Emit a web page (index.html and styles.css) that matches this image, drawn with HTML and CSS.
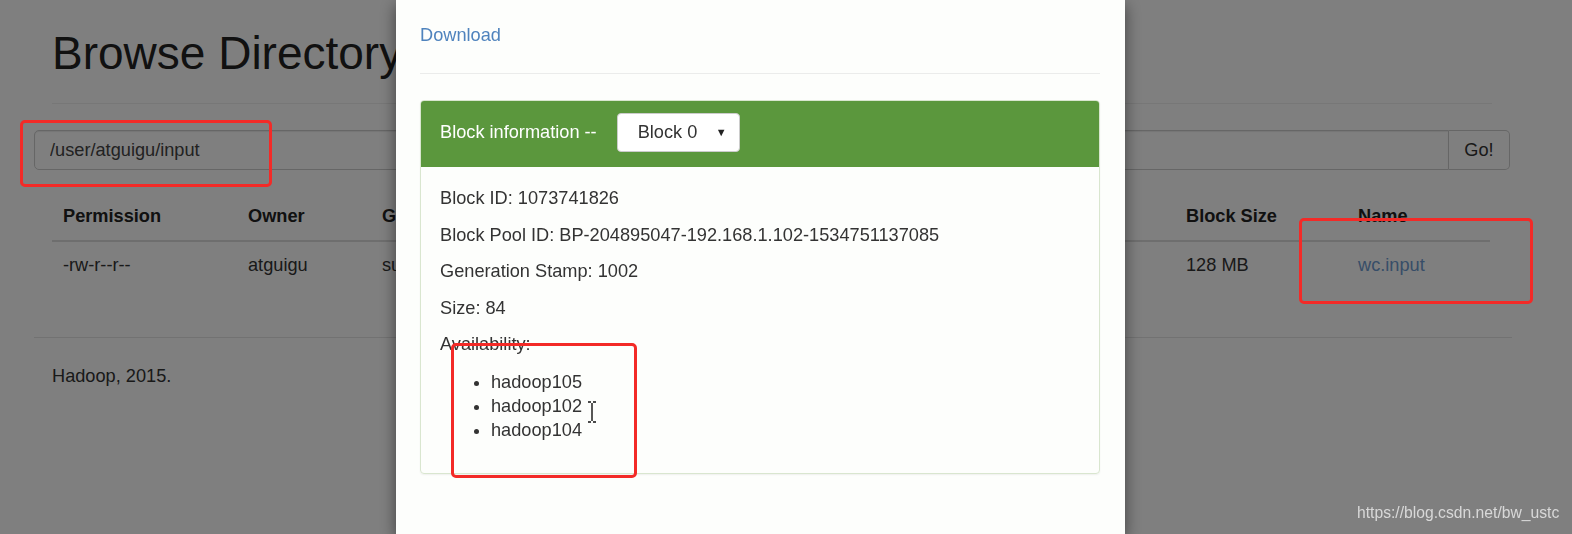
FILE: index.html
```html
<!DOCTYPE html>
<html lang="en">
<head>
    <meta charset="UTF-8">
    <title>Browsing HDFS</title>
    <link rel="stylesheet" href="styles.css">
</head>
<body>
    <div class="page">
        <h1>Browse Directory</h1>
        <hr class="rule">

        <form class="path-form">
            <input class="path-input" type="text" value="/user/atguigu/input">
            <button class="path-go" type="button">Go!</button>
        </form>

        <table class="listing">
            <colgroup>
                <col class="c-perm">
                <col class="c-owner">
                <col class="c-group">
                <col class="c-hidden">
                <col class="c-block">
                <col class="c-name">
            </colgroup>
            <thead>
                <tr>
                    <th>Permission</th>
                    <th>Owner</th>
                    <th class="clip">Group</th>
                    <th></th>
                    <th>Block Size</th>
                    <th>Name</th>
                </tr>
            </thead>
            <tbody>
                <tr>
                    <td>-rw-r--r--</td>
                    <td>atguigu</td>
                    <td class="clip">supergroup</td>
                    <td></td>
                    <td>128 MB</td>
                    <td><a href="#">wc.input</a></td>
                </tr>
            </tbody>
        </table>

        <hr class="footer-rule">
        <p class="footer">Hadoop, 2015.</p>
    </div>

    <div class="backdrop">
        <div class="modal">
            <a class="download" href="#">Download</a>
            <hr class="modal-rule">

            <div class="panel">
                <div class="panel-heading">
                    <span>Block information --</span>
                    <div class="block-select">
                        <span>Block 0</span>
                        <span class="caret">&#9660;</span>
                    </div>
                </div>
                <div class="panel-body">
                    <p>Block ID: 1073741826</p>
                    <p>Block Pool ID: BP-204895047-192.168.1.102-1534751137085</p>
                    <p>Generation Stamp: 1002</p>
                    <p>Size: 84</p>
                    <p>Availability:</p>
                    <ul class="hosts">
                        <li>hadoop105</li>
                        <li>hadoop102</li>
                        <li>hadoop104</li>
                    </ul>
                </div>
            </div>
        </div>
    </div>

    <!-- red marks drawn over the screenshot -->
    <div class="mark mark-path"></div>
    <div class="mark mark-name"></div>
    <div class="mark mark-hosts"></div>

    <svg class="ibeam" width="10" height="22" viewBox="0 0 10 22">
        <path d="M1 1h3M6 1h3M5 2v18M1 21h3M6 21h3" stroke="#111" stroke-width="1.4" fill="none"/>
    </svg>

    <div class="watermark">https://blog.csdn.net/bw_ustc</div>
</body>
</html>
```

FILE: styles.css
```css
* {
    margin: 0;
    padding: 0;
    box-sizing: border-box;
}

body {
    font-family: 'Liberation Sans', Arial, sans-serif;
    font-size: 18.2px;
    line-height: 25px;
    color: #333;
    background: #fff;
    width: 1572px;
    height: 534px;
    overflow: hidden;
}

/* ---------- page behind the dialog ---------- */

.page {
    width: 1476px;
    margin-left: 34px;
}

h1 {
    margin: 29px 18px 0;
    font-size: 46px;
    font-weight: 400;
    line-height: 48px;
    color: #222;
    white-space: nowrap;
}

.rule {
    margin: 26px 18px 0;
    border: none;
    border-top: 1px solid #eee;
}

.path-form {
    display: flex;
    margin-top: 26px;
    height: 40px;
}

.path-input {
    flex: 1;
    height: 40px;
    padding: 0 15px;
    font: inherit;
    color: #444;
    border: 1px solid #ccc;
    border-radius: 5px 0 0 5px;
    background: #fff;
    box-shadow: inset 0 1px 1px rgba(0, 0, 0, 0.08);
}

.path-go {
    width: 61px;
    height: 40px;
    font: inherit;
    color: #333;
    background: #fff;
    border: 1px solid #ccc;
    border-left: none;
    border-radius: 0 5px 5px 0;
}

.listing {
    width: 1438px;
    margin: 23px 18px 0;
    border-collapse: collapse;
    table-layout: fixed;
}

.c-perm { width: 185px; }
.c-owner { width: 134px; }
.c-group { width: 25px; }
.c-hidden { width: 779px; }
.c-block { width: 172px; }
.c-name { width: 143px; }

.listing th,
.listing td {
    text-align: left;
    padding: 11px 11px;
    white-space: nowrap;
    overflow: hidden;
}

.listing .clip {
    padding-right: 0;
    text-overflow: clip;
}

.listing th {
    font-weight: 700;
    color: #222;
    border-bottom: 2px solid #ddd;
}

.listing td {
    color: #333;
}

.listing a {
    color: #6f9bd0;
    text-decoration: none;
}

.footer-rule {
    margin: 48px -2px 0 0;
    border: none;
    border-top: 1px solid #e4e4e4;
}

.footer {
    margin: 26px 18px 0;
    color: #333;
}

/* ---------- dialog ---------- */

.backdrop {
    position: fixed;
    inset: 0;
    background: rgba(0, 0, 0, 0.5);
}

.modal {
    margin-left: 396px;
    width: 729px;
    height: 100%;
    padding: 22px 25px 0 24px;
    background: #fdfefc;
    box-shadow: 0 5px 15px rgba(0, 0, 0, 0.5);
}

.download {
    display: inline-block;
    margin-top: 1px;
    color: #4f83bd;
    text-decoration: none;
}

.modal-rule {
    margin-top: 25px;
    border: none;
    border-top: 1px solid #ebeceb;
}

.panel {
    margin-top: 26px;
    border: 1px solid #d9e6cf;
    border-radius: 4px;
    box-shadow: 0 1px 2px rgba(0, 0, 0, 0.06);
}

.panel-heading {
    display: flex;
    align-items: center;
    gap: 20px;
    height: 66px;
    padding: 0 19px 3px;
    background: #5b973d;
    color: #fff;
    border-radius: 3px 3px 0 0;
}

.block-select {
    display: flex;
    align-items: center;
    justify-content: space-between;
    width: 123px;
    height: 39px;
    padding: 0 12px 0 20px;
    background: #fff;
    color: #333;
    border: 1px solid #ccc;
    border-radius: 4px;
}

.caret {
    font-size: 11px;
    color: #222;
}

.panel-body {
    padding: 19px 19px 19px;
}

.panel-body p {
    margin-bottom: 11.6px;
}

.hosts {
    padding-left: 51px;
    line-height: 24px;
    margin-top: 13px;
    margin-bottom: 12px;
}

/* ---------- annotations ---------- */

.mark {
    position: absolute;
    border: 3px solid #f32a27;
    border-radius: 5px;
}

.mark-path {
    left: 20px;
    top: 120px;
    width: 252px;
    height: 67px;
}

.mark-name {
    left: 1299px;
    top: 218px;
    width: 234px;
    height: 86px;
}

.mark-hosts {
    left: 451px;
    top: 343px;
    width: 186px;
    height: 135px;
}

.ibeam {
    position: absolute;
    left: 587px;
    top: 401px;
}

.watermark {
    position: absolute;
    left: 1357px;
    top: 503px;
    font-size: 15.7px;
    line-height: 20px;
    color: #d8d8d8;
}
```
